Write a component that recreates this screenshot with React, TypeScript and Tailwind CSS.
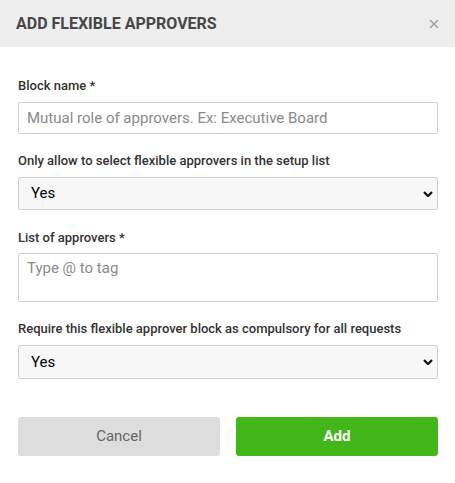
import React from "react";

function Chevron() {
  return (
    <svg width="10" height="6" viewBox="0 0 10 6" className="pointer-events-none absolute right-[5px] top-1/2 -translate-y-1/2">
      <path d="M1 1 L5 5 L9 1" fill="none" stroke="#111" strokeWidth="2.2" />
    </svg>
  );
}

function SelectBox({ h }: { h: string }) {
  return (
    <div className="relative">
      <select
        defaultValue="Yes"
        className={
          "block w-full appearance-none rounded-[2px] border border-[#d0d0d0] bg-[#f7f7f7] pl-[12px] text-[15px] text-black outline-none " +
          h
        }
      >
        <option>Yes</option>
        <option>No</option>
      </select>
      <Chevron />
    </div>
  );
}

export default function App() {
  return (
    <div className="w-[455px] h-[483px] bg-white" style={{ fontFamily: "Roboto, 'Liberation Sans', sans-serif" }}>
      <div className="flex h-[47px] items-center justify-between bg-[#eeeeee] pl-[16px] pr-[16px]">
        <div className="text-[16px] font-bold uppercase text-[#474747]">Add flexible approvers</div>
        <svg width="10" height="10" viewBox="0 0 10 10">
          <path d="M1 1 L9 9 M9 1 L1 9" stroke="#a0a0a0" strokeWidth="1.5" />
        </svg>
      </div>
      <div className="pl-[18px] pr-[17px] pt-[30px]">
        <div className="mb-[18px]">
          <div className="mb-[7px] h-[18px] text-[13px] font-medium leading-[18px] text-[#333]">Block name *</div>
          <input
            placeholder="Mutual role of approvers. Ex: Executive Board"
            className="block w-full h-[32px] rounded-[2px] border border-[#d0d0d0] bg-white px-[8px] text-[15px] text-[#333] placeholder:text-[#8a8a8a] outline-none"
          />
        </div>
        <div className="mb-[19px]">
          <div className="mb-[7px] h-[18px] text-[13px] font-medium leading-[18px] text-[#333]">Only allow to select flexible approvers in the setup list</div>
          <SelectBox h="h-[33px]" />
        </div>
        <div className="mb-[18px]">
          <div className="mb-[6px] h-[18px] text-[13px] font-medium leading-[18px] text-[#333]">List of approvers *</div>
          <textarea
            placeholder="Type @ to tag"
            className="block w-full h-[49px] resize-none rounded-[2px] border border-[#d0d0d0] bg-white px-[8px] py-[4px] text-[15px] leading-[20px] text-[#333] placeholder:text-[#8a8a8a] outline-none"
          />
        </div>
        <div className="mb-[38px]">
          <div className="mb-[7px] h-[18px] text-[13px] font-medium leading-[18px] text-[#333]">Require this flexible approver block as compulsory for all requests</div>
          <SelectBox h="h-[34px]" />
        </div>
        <div className="flex gap-[16px]">
          <button className="flex h-[39px] flex-1 items-center justify-center rounded-[3px] bg-[#dddddd] text-[15px] text-[#666]">Cancel</button>
          <button className="flex h-[39px] flex-1 items-center justify-center rounded-[3px] bg-[#43b619] text-[15px] font-bold text-white">Add</button>
        </div>
      </div>
    </div>
  );
}
